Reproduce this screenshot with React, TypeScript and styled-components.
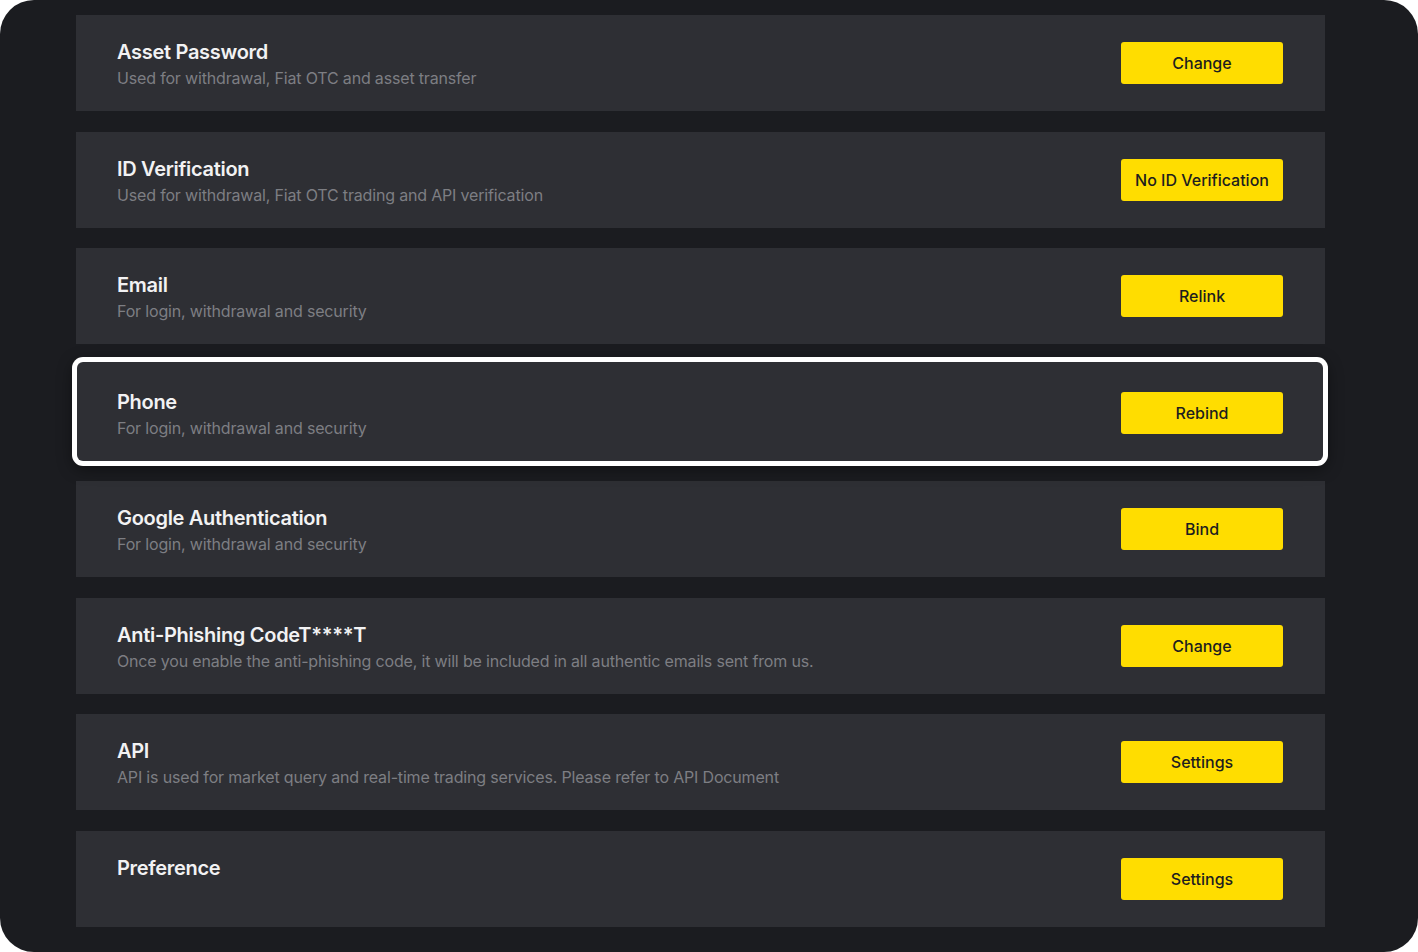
import React from "react";
import styled, { createGlobalStyle } from "styled-components";

const Global = createGlobalStyle`
  html, body { margin: 0; padding: 0; background: #ffffff; }
  body { font-family: Inter, "Noto Sans", sans-serif; }
`;

const Frame = styled.div`
  width: 1418px;
  height: 952px;
  box-sizing: border-box;
  background: #1b1c20;
  border-radius: 34px;
  padding: 15px 93px 0 76px;
  display: flex;
  flex-direction: column;
  gap: 20.57px;
  overflow: hidden;
`;

const Row = styled.div<{ $active?: boolean }>`
  height: 96px;
  flex: none;
  box-sizing: border-box;
  background: #2e2f34;
  display: flex;
  align-items: flex-start;
  justify-content: space-between;
  padding: 25px 42px 0 41px;
  ${(p) =>
    p.$active &&
    `
    height: 99px;
    margin: -3px 2px 0 1px;
    padding: 28px 40px 0 40px;
    border-radius: 6px;
    box-shadow: 0 0 0 5px #ffffff, 0 4px 16px 4px rgba(0,0,0,0.45);
    position: relative;
  `}
`;

const TextBlock = styled.div`
  display: flex;
  flex-direction: column;
`;

const Title = styled.div`
  color: #f2f2f3;
  font-size: 20px;
  font-weight: 600;
  line-height: 24px;
  letter-spacing: -0.3px;
`;

const Sub = styled.div`
  color: #7d7e83;
  font-size: 16px;
  font-weight: 400;
  line-height: 24px;
  margin-top: 2px;
  letter-spacing: -0.17px;
`;

const Button = styled.button`
  align-self: center;
  width: 162px;
  height: 42px;
  margin-top: -25px;
  border: none;
  border-radius: 3px;
  background: #ffdd00;
  color: #1d1d1f;
  font-family: Inter, "Noto Sans", sans-serif;
  font-size: 16px;
  font-weight: 500;
  cursor: pointer;
  padding: 0;
`;

const items = [
  { t: "Asset Password", s: "Used for withdrawal, Fiat OTC and asset transfer", b: "Change" },
  { t: "ID Verification", s: "Used for withdrawal, Fiat OTC trading and API verification", b: "No ID Verification" },
  { t: "Email", s: "For login, withdrawal and security", b: "Relink" },
  { t: "Phone", s: "For login, withdrawal and security", b: "Rebind", active: true },
  { t: "Google Authentication", s: "For login, withdrawal and security", b: "Bind" },
  {
    t: "Anti-Phishing CodeT****T",
    s: "Once you enable the anti-phishing code, it will be included in all authentic emails sent from us.",
    b: "Change",
  },
  {
    t: "API",
    s: "API is used for market query and real-time trading services. Please refer to API Document",
    b: "Settings",
  },
  { t: "Preference", s: "", b: "Settings" },
];

export default function App() {
  return (
    <>
      <Global />
      <Frame>
        {items.map((it) => (
          <Row key={it.t} $active={it.active}>
            <TextBlock>
              <Title>{it.t}</Title>
              {it.s && <Sub>{it.s}</Sub>}
            </TextBlock>
            <Button>{it.b}</Button>
          </Row>
        ))}
      </Frame>
    </>
  );
}
